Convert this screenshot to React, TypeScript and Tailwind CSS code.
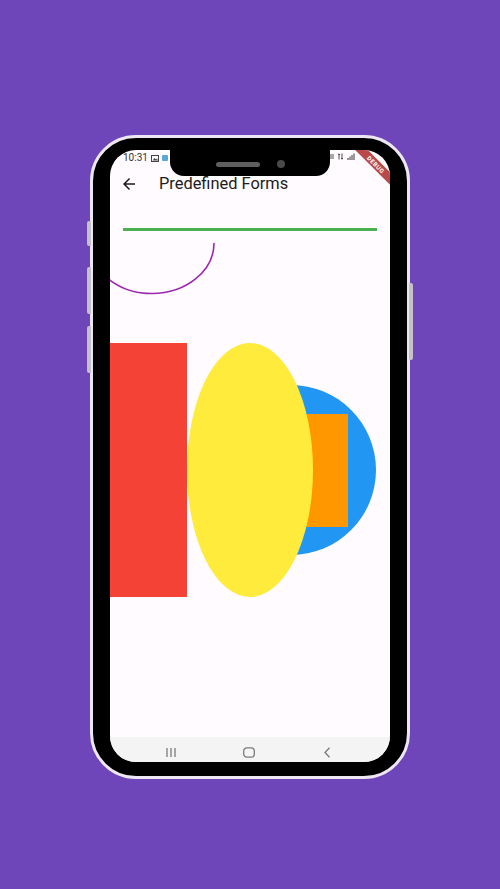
import React from "react";

function NavIcons() {
  return (
    <div className="flex h-[25px] shrink-0 items-center bg-[#f4f4f4] pl-[54px] pt-[6px]">
      <svg width="14" height="11" viewBox="0 0 14 11" className="mr-[64px]">
        <path d="M3 1v9M7 1v9M11 1v9" stroke="#7a7a7a" strokeWidth="1.3" />
      </svg>
      <svg width="14" height="11" viewBox="0 0 14 11" className="mr-[64px]">
        <rect x="1.7" y="0.8" width="10.6" height="9.4" rx="3.2" fill="none" stroke="#7a7a7a" strokeWidth="1.3" />
      </svg>
      <svg width="14" height="11" viewBox="0 0 14 11">
        <path d="M9.5 0.8 5 5.5l4.5 4.7" fill="none" stroke="#7a7a7a" strokeWidth="1.3" />
      </svg>
    </div>
  );
}

export default function App() {
  return (
    <div className="flex h-[889px] w-[500px] justify-center bg-[#6f45ba] pt-[135px] font-['Roboto',sans-serif]">
      <div className="relative h-[644px] w-[320px] rounded-[46px] border-[3px] border-[#ece7f3] bg-black px-[17px] pb-[14px] pt-[12px]">
        {/* side buttons */}
        <div className="absolute left-[-6px] top-[83px] h-[25px] w-[4px] rounded-l-[2px] bg-[#c4c1c9]" />
        <div className="absolute left-[-6px] top-[129px] h-[47px] w-[4px] rounded-l-[2px] bg-[#c4c1c9]" />
        <div className="absolute left-[-6px] top-[188px] h-[47px] w-[4px] rounded-l-[2px] bg-[#c4c1c9]" />
        <div className="absolute right-[-6px] top-[145px] h-[77px] w-[4px] rounded-r-[2px] bg-[#c4c1c9]" />

        <div className="relative flex h-full w-full flex-col overflow-hidden rounded-[26px] bg-[#fffbfe]">
          {/* status bar */}
          <div className="flex h-[20px] shrink-0 items-start justify-between px-[13px] pt-[3px] text-[10px] leading-[10px] text-[#333]">
            <div className="flex items-center gap-[3px]">
              <span>10:31</span>
              <svg width="8" height="7" viewBox="0 0 8 7">
                <rect x="0.5" y="0.5" width="7" height="6" fill="none" stroke="#444" strokeWidth="1" />
                <path d="M1.5 5.5 3.5 3l1.5 1.5 1-1 1 2z" fill="#444" />
              </svg>
              <svg width="6" height="6" viewBox="0 0 6 6">
                <rect x="0" y="0" width="6" height="6" rx="1" fill="#58a8d8" />
              </svg>
            </div>
            <div className="mr-[22px] flex items-center gap-[3px]">
              <svg width="4" height="7" viewBox="0 0 4 7">
                <path d="M1 1v5M3 1v5" stroke="#555" strokeWidth="1" />
              </svg>
              <svg width="7" height="7" viewBox="0 0 7 7">
                <path d="M2 0.5v6M1 1.5h2M5 0.5v6M4 5.5h2" stroke="#555" strokeWidth="1" />
              </svg>
              <svg width="8" height="7" viewBox="0 0 8 7">
                <path d="M1 7V5M3 7V3.5M5 7V2M7 7V0.5" stroke="#555" strokeWidth="1.2" />
              </svg>
            </div>
          </div>

          {/* notch */}
          <div className="absolute left-[60px] top-0 z-10 flex h-[26px] w-[160px] items-center justify-center gap-[17px] rounded-b-[14px] bg-black pt-[2px]">
            <div className="h-[5px] w-[44px] rounded-full bg-[#5f5f5f]" />
            <div className="h-[8px] w-[8px] rounded-full bg-[#4a4a4a]" />
          </div>

          {/* debug banner */}
          <div className="absolute right-[-26px] top-[10px] z-20 flex h-[9px] w-[80px] rotate-45 items-center justify-center bg-[#b84a4a] text-[6px] font-bold leading-none tracking-[0.5px] text-white">
            DEBUG
          </div>

          {/* app bar */}
          <div className="flex h-[28px] shrink-0 items-center pl-[10px]">
            <svg width="18" height="18" viewBox="0 0 24 24">
              <path d="M20 11H7.83l5.59-5.59L12 4l-8 8 8 8 1.41-1.41L7.83 13H20v-2z" fill="#1d1b20" />
            </svg>
            <span className="ml-[21px] text-[16.4px] leading-none text-[#1d1b20]">Predefined Forms</span>
          </div>

          {/* green line */}
          <div className="mx-[13px] mt-[30px] h-[3px] shrink-0 bg-[#4caf50]" />

          {/* arc */}
          <svg width="280" height="70" viewBox="0 0 280 70" className="shrink-0">
            <path d="M104 12 A62 50.5 0 0 1 -20 12" fill="none" stroke="#9c27b0" strokeWidth="1.6" />
          </svg>

          {/* shapes */}
          <div className="relative mt-[42px] flex h-[254px] shrink-0">
            <div className="absolute left-[96px] top-[42px] flex h-[170px] w-[170px] items-center justify-center rounded-full bg-[#2196f3]">
              <div className="h-[113px] w-[113px] bg-[#ff9800]" />
            </div>
            <div className="relative h-full w-[77px] bg-[#f44336]" />
            <div className="relative h-full w-[126px] rounded-[50%] bg-[#ffeb3b]" />
          </div>

          <div className="flex-1" />
          <NavIcons />
        </div>
      </div>
    </div>
  );
}
